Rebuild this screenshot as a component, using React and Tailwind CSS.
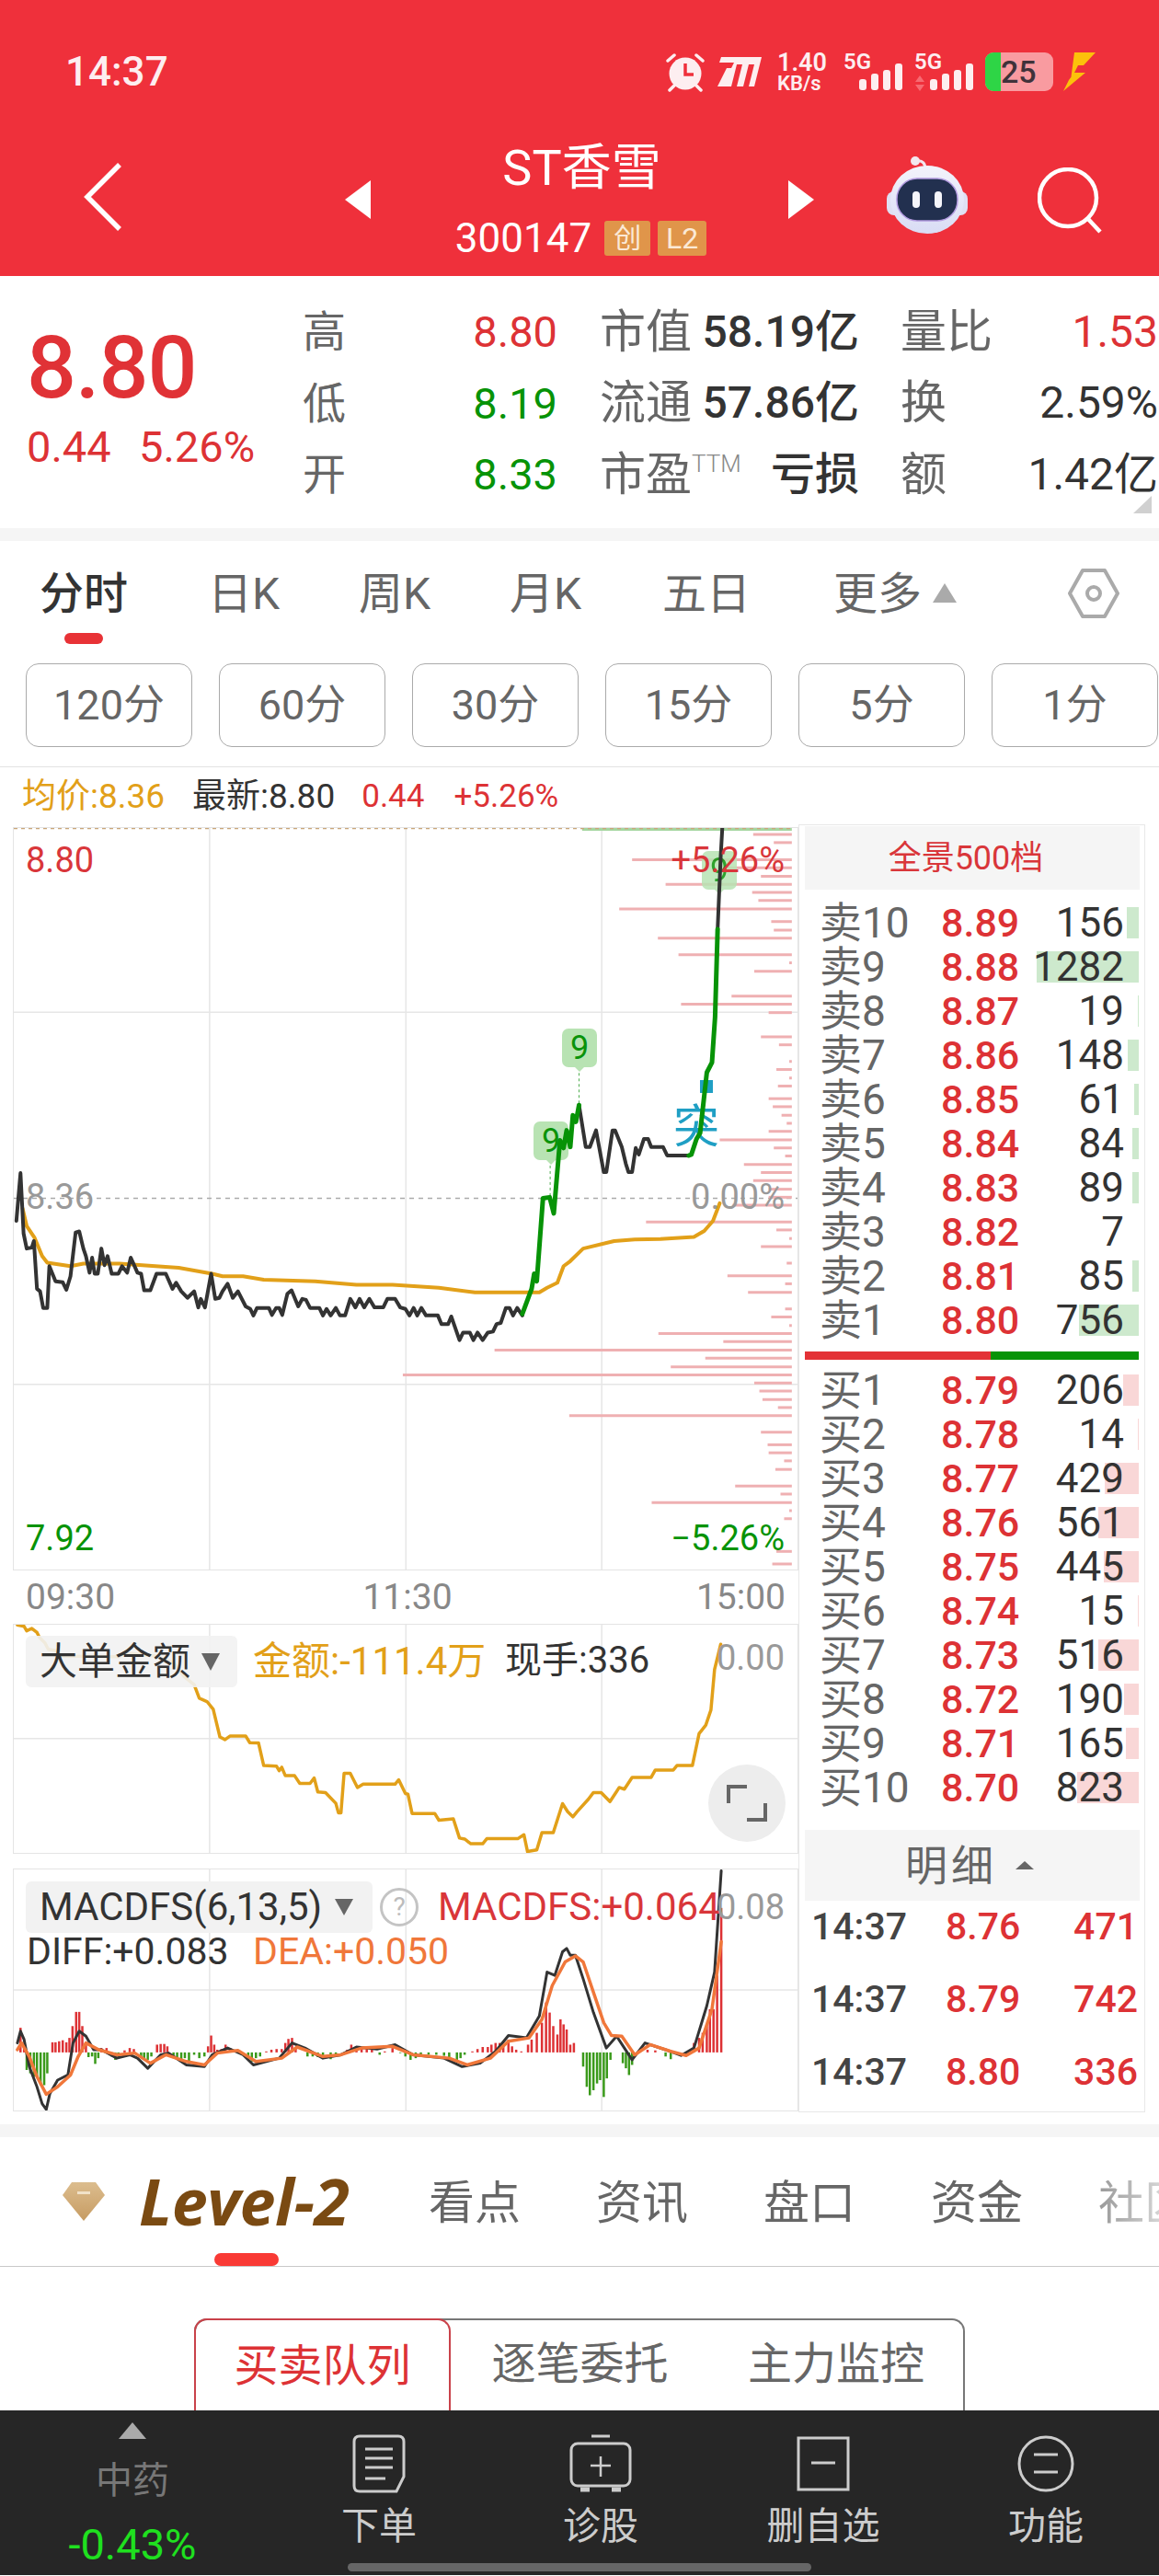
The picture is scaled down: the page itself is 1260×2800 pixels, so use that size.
import React from "react";

const FONT = { fontFamily: 'Roboto, "Noto Sans CJK SC", sans-serif' };

const BLACK1 = "30,815 38,720 44,840 50,870 60,868 64,855 70,950 76,955 82,988 90,988 94,905 106,935 120,937 127,952 135,925 145,838 152,836 160,870 165,885 172,918 177,888 182,920 188,920 195,870 201,903 207,885 215,920 228,920 235,905 245,918 252,888 265,918 272,920 278,953 290,953 302,920 320,920 333,950 340,938 350,955 362,968 375,955 383,987 388,970 396,987 408,920 416,970 424,968 430,955 440,940 450,968 460,955 475,985 484,990 490,1003 497,988 520,988 526,1002 534,988 540,988 546,1002 556,960 564,953 577,985 585,970 592,972 600,988 618,988 625,1003 632,990 640,1003 650,988 658,1003 668,1003 678,970 688,987 696,970 705,987 715,970 725,987 742,987 750,970 765,970 775,987 785,990 793,1003 801,988 808,1003 816,988 825,1003 848,1003 855,1020 868,1020 874,1005 890,1052 897,1037 910,1037 917,1052 925,1037 935,1052 945,1037 955,1035 962,1020 970,1018 980,988 987,988 994,1003 1002,988 1012,1003";
const GREEN1 = "1012,1000 1030,950 1035,920 1040,935 1052,770 1065,768 1073,800 1085,655 1092,670 1098,635 1105,668 1110,605 1116,618 1122,585";
const BLACK2 = "1122,585 1135,668 1143,668 1155,635 1170,718 1175,718 1187,635 1192,635 1205,668 1213,702 1218,718 1225,718 1232,670 1238,683 1248,652 1256,652 1262,668 1285,668 1293,685 1335,685";
const GREEN2 = "1335,685 1340,683 1350,652 1357,640 1370,520 1380,500 1386,410 1391,235";
const BLACK3 = "1391,235 1397,90 1400,35";
const AVG = "42,790 50,825 65,848 80,885 90,898 135,905 160,900 230,900 300,905 345,908 410,920 430,925 470,925 510,932 610,935 690,942 760,942 850,948 920,957 1045,957 1060,948 1080,938 1092,905 1105,895 1130,870 1190,855 1230,852 1280,851 1345,847 1365,835 1382,815 1395,780";
const VOL = [[47,1460],[63,1500],[97,1225],[113,1395],[130,1475],[146,1290],[162,1458],[178,1470],[195,1200],[220,1495],[237,1500],[253,1275],[286,1315],[302,1530],[319,1462],[368,1418],[384,1320],[401,1490],[449,1475],[465,1510],[498,1530],[514,1505],[531,1530],[547,1508],[572,1490],[588,1498],[605,1515],[621,1525],[637,1490],[654,1395],[670,1500],[686,1522],[703,1442],[719,1475],[735,1460],[752,1490],[768,1490],[784,1420],[817,1252],[833,1505],[850,1530],[866,1475],[883,1535],[899,1525],[924,1410],[940,1522],[957,1450],[990,1522],[1006,1495],[1023,1530],[1039,1276],[1055,1402],[1072,958],[1088,1367],[1105,1300],[1121,780],[1137,1462],[1153,1472],[1170,1478],[1186,1508],[1202,1103],[1235,1475],[1260,1488],[1276,1490],[1292,1520],[1309,1503],[1342,1425],[1358,1513],[1375,1263],[1391,1530],[1407,1520],[1472,1505],[1497,1497]];
const FUND = "32,68 45,72 50,85 60,78 70,90 75,105 85,120 92,140 110,145 115,160 230,162 240,150 270,155 300,160 335,180 355,220 375,245 385,285 400,295 412,318 425,400 435,408 445,397 475,397 483,417 500,418 510,485 535,487 540,500 545,490 552,515 570,515 580,538 600,538 608,522 615,563 630,565 650,597 655,625 660,625 666,508 678,508 692,550 703,540 765,540 772,527 785,568 790,570 798,627 842,627 850,647 878,643 890,700 900,703 912,717 935,717 943,702 1003,702 1015,690 1022,740 1040,735 1050,684 1072,684 1090,598 1100,622 1110,637 1118,622 1140,585 1150,565 1165,565 1182,592 1195,562 1200,550 1210,555 1225,520 1262,520 1270,498 1305,498 1312,485 1342,485 1355,390 1368,365 1378,320 1385,200 1397,125";
const DIFF = "32,1300 38,1265 45,1290 55,1370 70,1430 80,1480 88,1497 95,1450 110,1410 130,1395 140,1300 152,1265 165,1280 180,1320 195,1320 225,1345 250,1335 265,1345 285,1375 310,1335 325,1330 360,1365 395,1370 410,1335 440,1315 470,1335 490,1365 540,1345 565,1300 590,1315 625,1345 660,1335 690,1312 730,1318 765,1305 800,1335 860,1345 895,1370 930,1360 960,1325 985,1278 1020,1285 1045,1220 1060,1090 1075,1100 1090,1030 1098,1020 1105,1040 1115,1040 1130,1110 1150,1210 1175,1315 1195,1280 1210,1315 1225,1350 1250,1300 1290,1320 1320,1337 1345,1315 1370,1190 1385,1090 1398,790";
const DEA = "32,1320 40,1300 55,1340 70,1400 88,1452 110,1430 135,1395 150,1340 165,1300 190,1320 225,1335 260,1330 290,1360 320,1335 360,1355 395,1365 420,1330 460,1322 495,1355 545,1345 575,1312 625,1340 660,1335 700,1315 760,1310 800,1335 870,1345 905,1365 950,1345 985,1295 1025,1285 1050,1230 1070,1130 1095,1060 1115,1042 1130,1060 1150,1150 1170,1240 1185,1278 1205,1280 1230,1335 1260,1305 1300,1325 1330,1337 1355,1315 1380,1200 1398,1000";
const MBARS = [[38,1255],[45,1300],[50,1380],[57,1390],[64,1400],[70,1400],[77,1425],[84,1425],[90,1390],[100,1298],[106,1298],[113,1295],[120,1292],[127,1298],[133,1285],[139,1250],[146,1208],[152,1208],[158,1250],[165,1300],[170,1342],[177,1340],[183,1362],[189,1345],[195,1315],[205,1315],[215,1340],[222,1350],[228,1345],[240,1322],[250,1315],[258,1318],[272,1340],[278,1345],[285,1350],[292,1340],[303,1305],[310,1303],[317,1303],[323,1310],[335,1345],[342,1345],[350,1350],[357,1345],[365,1355],[375,1335],[385,1345],[395,1340],[402,1310],[408,1278],[414,1305],[420,1320],[428,1318],[436,1305],[445,1315],[480,1345],[487,1355],[495,1345],[503,1340],[515,1325],[525,1320],[535,1318],[545,1318],[552,1300],[558,1288],[565,1285],[572,1315],[595,1340],[605,1340],[615,1342],[625,1345],[640,1348],[650,1340],[672,1320],[680,1305],[690,1315],[700,1315],[710,1312],[720,1320],[735,1335],[745,1325],[760,1315],[775,1330],[785,1340],[795,1350],[805,1345],[815,1335],[830,1335],[845,1335],[860,1338],[870,1345],[885,1350],[892,1345],[900,1335],[915,1325],[925,1318],[935,1312],[945,1312],[952,1305],[960,1300],[968,1300],[975,1305],[985,1290],[992,1310],[1000,1320],[1010,1325],[1023,1305],[1030,1290],[1040,1270],[1050,1240],[1058,1180],[1065,1210],[1072,1250],[1080,1275],[1086,1230],[1092,1245],[1098,1260],[1105,1305],[1112,1300],[1130,1370],[1137,1430],[1143,1455],[1150,1440],[1157,1420],[1163,1410],[1170,1460],[1176,1405],[1183,1350],[1207,1360],[1213,1375],[1219,1395],[1225,1365],[1255,1320],[1270,1322],[1290,1340],[1300,1348],[1345,1300],[1355,1285],[1362,1270],[1370,1250],[1376,1200],[1383,1200],[1390,1100],[1398,900]];

const ASKS = [["卖10","8.89","156",13],["卖9","8.88","1282",111],["卖8","8.87","19",1],["卖7","8.86","148",12],["卖6","8.85","61",5],["卖5","8.84","84",7],["卖4","8.83","89",7],["卖3","8.82","7",0],["卖2","8.81","85",7],["卖1","8.80","756",65]];
const BIDS = [["买1","8.79","206",17],["买2","8.78","14",1],["买3","8.77","429",37],["买4","8.76","561",44],["买5","8.75","445",38],["买6","8.74","15",1],["买7","8.73","516",44],["买8","8.72","190",16],["买9","8.71","165",14],["买10","8.70","823",67]];

function Line({ points, color, width = 3 }) {
  return <polyline points={points} fill="none" stroke={color} strokeWidth={width} strokeLinejoin="round" strokeLinecap="round" vectorEffect="non-scaling-stroke" />;
}

function GridLines({ mid, y1, y2 }) {
  return (
    <g stroke="#e6e6e6" strokeWidth="1.5">
      {[405, 786, 1166].map((x) => (
        <line key={x} x1={x} x2={x} y1={y1} y2={y2} vectorEffect="non-scaling-stroke" />
      ))}
      {mid.map((y) => (
        <line key={y} x1="25" x2="1546" y1={y} y2={y} vectorEffect="non-scaling-stroke" />
      ))}
    </g>
  );
}

function DepthRow({ row, barColor }) {
  const [label, price, vol, bar] = row;
  return (
    <div className="relative flex h-[48px] items-center pl-[16px] pr-[16px]">
      <div className={`absolute right-0 top-[7px] h-[34px] ${barColor}`} style={{ width: bar }} />
      <span className="relative w-[132px] whitespace-nowrap text-[46px] leading-none text-[#666]">{label}</span>
      <span className="relative w-[83px] text-[43px] leading-none font-medium text-[#dd3235]">{price}</span>
      <span className="relative flex-1 text-right text-[44px] leading-none text-[#333]">{vol}</span>
    </div>
  );
}

function Alarm() {
  return (
    <svg width="44" height="44" viewBox="0 0 44 44">
      <circle cx="22" cy="24" r="17.5" fill="#fdeef0" />
      <path d="M22 13v12h9" fill="none" stroke="#ef303b" strokeWidth="3.5" />
      <path d="M3 10l7-6M41 10l-7-6M5 42l5-5M39 42l-5-5" stroke="#fdeef0" strokeWidth="3.5" strokeLinecap="round" />
    </svg>
  );
}

function MLogo() {
  return (
    <svg width="48" height="32" viewBox="0 0 48 32">
      <path d="M4 0H48L40 32H34L40 8H34L28 32H21L27 8H21L15 32H0L10 12H15L18 6H2Z" fill="#fdeef0" />
    </svg>
  );
}

function StatusNet({ arrows }) {
  return (
    <div className="relative h-[44px] w-[64px]">
      <span className="absolute left-0 top-[-1px] text-[24px] leading-[24px] font-semibold text-[#fdeef0]">5G</span>
      <svg className="absolute left-0 top-0" width="64" height="44" viewBox="0 0 64 44">
        {arrows && <path d="M1 33l5-7 5 7zM1 36l5 7 5-7z" fill="#f76a72" />}
        <rect x="17" y="30" width="8" height="12" rx="3" fill="#fdeef0" />
        <rect x="30" y="24" width="8" height="18" rx="3" fill="#fdeef0" />
        <rect x="43" y="20" width="8" height="22" rx="3" fill="#fdeef0" />
        <rect x="56" y="13" width="8" height="29" rx="3" fill="#fdeef0" />
      </svg>
    </div>
  );
}

function Robot() {
  return (
    <svg width="88" height="84" viewBox="0 0 88 84">
      <defs>
        <linearGradient id="rb" x1="0" y1="0" x2="0" y2="1">
          <stop offset="0" stopColor="#f3f3fb" />
          <stop offset="1" stopColor="#d9dcf5" />
        </linearGradient>
      </defs>
      <circle cx="31" cy="5" r="5" fill="#f3e7ee" />
      <path d="M33 5c6-1 9 3 9 9" fill="none" stroke="#f3e7ee" strokeWidth="3" />
      <rect x="0" y="38" width="88" height="26" rx="8" fill="#dfe0f3" />
      <ellipse cx="44" cy="47" rx="40" ry="37" fill="url(#rb)" />
      <rect x="11" y="24" width="66" height="46" rx="22" fill="#22304f" stroke="#b39be0" strokeWidth="1.5" />
      <rect x="28" y="38" width="8" height="18" rx="4" fill="#f5f5fa" />
      <rect x="52" y="38" width="8" height="18" rx="4" fill="#f5f5fa" />
    </svg>
  );
}

function Header() {
  return (
    <div className="h-[300px] bg-[#ef303b] text-white">
      <div className="flex h-[156px] items-center pl-[71px]">
        <span className="w-[652px] text-[44px] leading-none font-medium text-[#fdeef0]">14:37</span>
        <Alarm />
        <div className="ml-[13px]"><MLogo /></div>
        <div className="ml-[17px] flex w-[56px] flex-col items-start font-semibold text-[#fdeef0]">
          <span className="text-[27px] leading-[26px]">1.40</span>
          <span className="text-[22px] leading-[20px]">KB/s</span>
        </div>
        <div className="ml-[16px]"><StatusNet /></div>
        <div className="ml-[13px]"><StatusNet arrows /></div>
        <div className="relative ml-[13px] flex h-[42px] w-[74px] items-center overflow-hidden rounded-[9px] bg-[#f99ba0]">
          <div className="h-full w-[17px] bg-[#2ed546]" />
          <span className="absolute left-[17px] text-[34px] leading-none font-medium text-[#40323a]">25</span>
        </div>
        <div className="ml-[11px]">
          <svg width="36" height="42" viewBox="0 0 36 42">
            <path d="M12 0H35L22 14H16L8 30ZM12 22H24L0 42L6 30Z" fill="#fcc10b" />
          </svg>
        </div>
      </div>
      <div className="flex h-[144px] items-start">
        <div className="ml-[91px] mt-[20px]">
          <svg width="42" height="76" viewBox="0 0 42 76">
            <path d="M39 3L4 38L39 73" fill="none" stroke="#fff" strokeWidth="5.5" />
          </svg>
        </div>
        <div className="ml-[242px] mt-[40px] h-0 w-0 border-y-[21px] border-r-[28px] border-y-transparent border-r-white" />
        <div className="ml-[92px] flex w-[273px] flex-col items-center">
          <span className="mt-[-3px] pl-[2px] text-[54px] leading-[60px] text-white">ST香雪</span>
          <div className="mt-[27px] flex h-[38px] items-center">
            <span className="text-[44px] leading-none text-white">300147</span>
            <span className="ml-[14px] flex h-[38px] w-[50px] items-center justify-center rounded-[3px] bg-[#e0954a] text-[30px] leading-none text-[#fbe9d6]">创</span>
            <span className="ml-[8px] flex h-[38px] w-[53px] items-center justify-center rounded-[3px] bg-[#e0954a] text-[32px] leading-none text-[#fbe9d6]">L2</span>
          </div>
        </div>
        <div className="ml-[89px] mt-[40px] h-0 w-0 border-y-[21px] border-l-[28px] border-y-transparent border-l-white" />
        <div className="ml-[79px] mt-[14px]"><Robot /></div>
        <div className="ml-[76px] mt-[26px]">
          <svg width="72" height="72" viewBox="0 0 72 72">
            <circle cx="33" cy="33" r="31" fill="none" stroke="#fff" strokeWidth="4.5" />
            <path d="M54 55L68 70" stroke="#fff" strokeWidth="4.5" />
          </svg>
        </div>
      </div>
    </div>
  );
}

function QuoteRow({ label, val, valColor, l2, v2, l3, v3, v3Color = "text-[#333]", sup }) {
  return (
    <div className="flex h-[77.5px] items-center">
      <span className="w-[47px] text-[47px] leading-none text-[#666]">{label}</span>
      <span className={`w-[230px] text-right text-[47px] leading-none ${valColor}`}>{val}</span>
      <span className="ml-[46px] flex w-[110px] items-start whitespace-nowrap text-[50px] leading-none text-[#666]">{l2}{sup && <span className="text-[26px] leading-[26px] font-light text-[#888]">TTM</span>}</span>
      <span className="w-[172px] whitespace-nowrap text-right text-[48px] leading-none font-medium text-[#333]">{v2}</span>
      <span className="ml-[45px] w-[100px] text-[50px] leading-none text-[#666]">{l3}</span>
      <span className={`w-[180px] whitespace-nowrap text-right text-[48px] leading-none ${v3Color}`}>{v3}</span>
    </div>
  );
}

function Quote() {
  return (
    <div className="relative flex h-[274px] bg-white">
      <div className="w-[329px] pl-[29px] pt-[55px]">
        <div className="text-[95px] leading-[90px] font-medium tracking-[-1px] text-[#e03236]">8.80</div>
        <div className="mt-[17px] flex text-[47px] leading-none text-[#dd3235]">
          <span className="w-[122px]">0.44</span><span>5.26%</span>
        </div>
      </div>
      <div className="flex flex-col pt-[22px]">
        <QuoteRow label="高" val="8.80" valColor="text-[#dd3235]" l2="市值" v2="58.19亿" l3="量比" v3="1.53" v3Color="text-[#dd3235]" />
        <QuoteRow label="低" val="8.19" valColor="text-[#079307]" l2="流通" v2="57.86亿" l3="换" v3="2.59%" />
        <QuoteRow label="开" val="8.33" valColor="text-[#079307]" l2="市盈" sup v2="亏损" l3="额" v3="1.42亿" />
      </div>
      <div className="absolute bottom-[16px] right-[8px] h-0 w-0 border-b-[19px] border-l-[20px] border-b-[#d0d0d0] border-l-transparent" />
    </div>
  );
}

function Tabs() {
  return (
    <>
      <div className="flex h-[133px] items-start pt-[34px] text-[48px] leading-none">
        <div className="relative ml-[43px] w-[183px] font-medium text-[#333]">
          分时
          <div className="absolute left-[27px] top-[66px] h-[12px] w-[42px] rounded-full bg-[#e83236]" />
        </div>
        <span className="w-[164px] text-[#666]">日K</span>
        <span className="w-[164px] text-[#666]">周K</span>
        <span className="w-[166px] text-[#666]">月K</span>
        <span className="w-[186px] text-[#666]">五日</span>
        <span className="flex w-[256px] text-[#666]">
          更多
          <span className="ml-[12px] mt-[12px] h-0 w-0 border-x-[13px] border-b-[21px] border-x-transparent border-b-[#aaa]" />
        </span>
        <svg className="ml-[-1px] mt-[-4px]" width="56" height="54" viewBox="0 0 56 54">
          <path d="M16 2H40L54 27L40 52H16L2 27Z" fill="none" stroke="#aaa" strokeWidth="4" strokeLinejoin="round" />
          <circle cx="28" cy="27" r="7" fill="none" stroke="#aaa" strokeWidth="4" />
        </svg>
      </div>
      <div className="flex h-[91px] gap-[29px] pl-[28px]">
        {["120分", "60分", "30分", "15分", "5分", "1分"].map((t) => (
          <div key={t} className="flex h-[91px] w-[181px] shrink-0 items-center justify-center rounded-[14px] border border-[#aaa] text-[45px] leading-none text-[#666]">{t}</div>
        ))}
      </div>
      <div className="h-[21px]" />
      <div className="flex h-[63px] items-center border-t border-[#e2e2e2] pl-[24px] text-[37px] leading-none">
        <span className="text-[#e2a019]">均价:8.36</span>
        <span className="ml-[30px] text-[#333]">最新:8.80</span>
        <span className="ml-[29px] text-[35px] text-[#dd3235]">0.44</span>
        <span className="ml-[32px] text-[35px] text-[#dd3235]">+5.26%</span>
      </div>
    </>
  );
}

function Badge({ left, top, faded }) {
  return (
    <div className="absolute flex h-[42px] w-[38px] items-center justify-center rounded-[7px] bg-[#b8e3b3] text-[36px] leading-none text-[#0a930a]" style={{ left, top, opacity: faded ? 0.85 : 1 }}>
      9
      <div className="absolute bottom-[-5px] left-[14px] h-0 w-0 border-x-[5px] border-t-[5px] border-x-transparent border-t-[#b8e3b3]" />
    </div>
  );
}

function MainChart() {
  return (
    <div className="relative h-[808px] w-[854px] border border-[#e4e4e4] bg-white">
      <svg className="absolute inset-0 h-full w-full" viewBox="25 34 1521 1474" preserveAspectRatio="none">
        <GridLines mid={[400, 1140]} y1={34} y2={1508} />
        <line x1="25" x2="1546" y1="770" y2="770" stroke="#aaa" strokeWidth="1.5" strokeDasharray="5 5" vectorEffect="non-scaling-stroke" />
        <g stroke="#efb0b2" strokeWidth="3">
          {VOL.map(([y, x]) => (
            <line key={y} x1={x} x2="1535" y1={y} y2={y} vectorEffect="non-scaling-stroke" />
          ))}
        </g>
        <line x1="1128" x2="1535" y1="36" y2="36" stroke="#a5d6a0" strokeWidth="4" vectorEffect="non-scaling-stroke" />
        <line x1="25" x2="1535" y1="35" y2="35" stroke="#c9a67a" strokeWidth="1.5" strokeDasharray="4 4" vectorEffect="non-scaling-stroke" />
        <line x1="1122" x2="1122" y1="510" y2="585" stroke="#4fae4f" strokeWidth="1" strokeDasharray="3 3" vectorEffect="non-scaling-stroke" />
        <line x1="1066" x2="1066" y1="705" y2="770" stroke="#4fae4f" strokeWidth="1" strokeDasharray="3 3" vectorEffect="non-scaling-stroke" />
      </svg>
      <Badge left={596} top={218} />
      <Badge left={565} top={319} />
      <Badge left={748} top={25} faded />
      <span className="absolute left-[717px] top-[300px] text-[50px] leading-none text-[#1f9fc4]">突</span>
      <div className="absolute left-[746px] top-[274px] h-[14px] w-[14px] bg-[#1f9fc4]" />
      <svg className="absolute inset-0 h-full w-full" viewBox="25 34 1521 1474" preserveAspectRatio="none">
        <Line points={AVG} color="#e2a019" width={4} />
        <Line points={BLACK1} color="#333" width={4} />
        <Line points={BLACK2} color="#333" width={4} />
        <Line points={BLACK3} color="#333" width={4} />
        <Line points={GREEN1} color="#079307" width={5} />
        <Line points={GREEN2} color="#079307" width={5} />
      </svg>
      <span className="absolute left-[13px] top-[16px] text-[38px] leading-none text-[#d9363a]">8.80</span>
      <span className="absolute right-[14px] top-[16px] text-[38px] leading-none text-[#d9363a]">+5.26%</span>
      <span className="absolute left-[13px] top-[382px] text-[38px] leading-none text-[#999]">8.36</span>
      <span className="absolute right-[14px] top-[382px] text-[38px] leading-none text-[#999]">0.00%</span>
      <span className="absolute left-[13px] bottom-[15px] text-[38px] leading-none text-[#079307]">7.92</span>
      <span className="absolute right-[14px] bottom-[15px] text-[38px] leading-none text-[#079307]">−5.26%</span>
    </div>
  );
}

function FundChart() {
  return (
    <div className="relative h-[250px] w-[854px] border border-[#e4e4e4] bg-white">
      <svg className="absolute inset-0 h-full w-full" viewBox="25 67 1521 677" preserveAspectRatio="none">
        <GridLines mid={[405]} y1={67} y2={744} />
        <Line points={FUND} color="#e2a019" width={3.5} />
      </svg>
      <div className="absolute left-[13px] top-[12px] flex h-[56px] w-[230px] items-center whitespace-nowrap rounded-[6px] bg-[#f2f2f2]/90 pl-[15px] text-[41px] leading-none text-[#333]">
        大单金额
        <span className="ml-[12px] h-0 w-0 border-x-[10px] border-t-[19px] border-x-transparent border-t-[#666]" />
      </div>
      <span className="absolute left-[260px] top-[19px] whitespace-nowrap text-[42px] leading-none text-[#e2a019]">金额:-111.4万</span>
      <span className="absolute left-[534px] top-[19px] whitespace-nowrap text-[40px] leading-none text-[#333]">现手:336</span>
      <span className="absolute right-[14px] top-[17px] text-[38px] leading-none text-[#999]">0.00</span>
      <div className="absolute bottom-[12px] right-[13px] flex h-[84px] w-[84px] items-center justify-center rounded-full bg-[#ededed]">
        <svg width="44" height="44" viewBox="0 0 44 44">
          <path d="M2 22V4H22M42 22V40H22" fill="none" stroke="#666" strokeWidth="4" />
        </svg>
      </div>
    </div>
  );
}

function MacdChart() {
  return (
    <div className="relative h-[264px] w-[854px] border border-[#e4e4e4] bg-white">
      <svg className="absolute inset-0 h-full w-full" viewBox="25 786 1521 714" preserveAspectRatio="none">
        <GridLines mid={[1143]} y1={786} y2={1500} />
        {MBARS.map(([x, y]) => (
          <line key={x} x1={x} x2={x} y1="1328" y2={y} stroke={y < 1328 ? "#dd3235" : "#3a9a1a"} strokeWidth="2.5" vectorEffect="non-scaling-stroke" />
        ))}
        <Line points={DIFF} color="#333" width={3} />
        <Line points={DEA} color="#f0773a" width={3.5} />
      </svg>
      <div className="absolute left-[13px] top-[13px] flex h-[56px] w-[377px] items-center whitespace-nowrap rounded-[6px] bg-[#f2f2f2] pl-[15px] text-[42px] leading-none text-[#333]">
        MACDFS(6,13,5)
        <span className="ml-[14px] h-0 w-0 border-x-[10px] border-t-[18px] border-x-transparent border-t-[#666]" />
      </div>
      <div className="absolute left-[398px] top-[20px] flex h-[42px] w-[42px] items-center justify-center rounded-full border-[3px] border-[#c4c4c4] text-[28px] leading-none text-[#bbb]">?</div>
      <span className="absolute left-[461px] top-[20px] whitespace-nowrap text-[42px] leading-none text-[#d9363a]">MACDFS:+0.064</span>
      <span className="absolute right-[14px] top-[22px] text-[38px] leading-none text-[#999]">0.08</span>
      <span className="absolute left-[14px] top-[69px] whitespace-nowrap text-[41px] leading-none text-[#333]">DIFF:+0.083</span>
      <span className="absolute left-[260px] top-[69px] whitespace-nowrap text-[41px] leading-none text-[#f0773a]">DEA:+0.050</span>
    </div>
  );
}

function LeftColumn() {
  return (
    <div className="w-[868px] pl-[14px] pt-[3px]">
      <MainChart />
      <div className="flex h-[58px] w-[854px] items-center justify-between px-[14px] text-[39px] leading-none text-[#888]">
        <span>09:30</span><span className="ml-[4px]">11:30</span><span>15:00</span>
      </div>
      <FundChart />
      <div className="h-[16px]" />
      <MacdChart />
    </div>
  );
}

function RightColumn() {
  return (
    <div className="h-[1400px] w-[377px] border border-[#e8e8e8] px-[6px] pt-[1px]">
      <div className="flex h-[69px] w-[364px] items-center justify-center bg-[#f5f5f5] pr-[14px] text-[36px] leading-none text-[#d9363a]">全景500档</div>
      <div className="pt-[12px]">
        {ASKS.map((r) => <DepthRow key={r[0]} row={r} barColor="bg-[#cde9cd]" />)}
      </div>
      <div className="mt-[10px] flex h-[9px]">
        <div className="w-[202px] bg-[#e33236]" />
        <div className="flex-1 bg-[#079307]" />
      </div>
      <div className="pt-[9px]">
        {BIDS.map((r) => <DepthRow key={r[0]} row={r} barColor="bg-[#f9d7d7]" />)}
      </div>
      <div className="mt-[22px] flex h-[77px] w-[364px] items-center justify-center bg-[#f5f5f5] pr-[6px] text-[46px] leading-none tracking-[4px] text-[#666]">
        明细
        <span className="ml-[20px] h-0 w-0 border-x-[10px] border-b-[9px] border-x-transparent border-b-[#666]" />
      </div>
      <div className="-mt-[11px]">
        {[["8.76", "471"], ["8.79", "742"], ["8.80", "336"]].map(([p, v]) => (
          <div key={p} className="flex h-[79px] items-center pl-[7px] pr-[1px] text-[41px] leading-none font-medium">
            <span className="w-[146px] text-[#444]">14:37</span>
            <span className="text-[#dd3235]">{p}</span>
            <span className="flex-1 text-right text-[#dd3235]">{v}</span>
          </div>
        ))}
      </div>
    </div>
  );
}

function Level2Tabs() {
  return (
    <div className="relative flex h-[141px] items-start overflow-hidden border-b border-[#c9c9c9] pt-[42px]">
      <svg className="ml-[68px] mt-[7px] shrink-0" width="46" height="42" viewBox="0 0 46 42">
        <defs>
          <linearGradient id="gem" x1="0" y1="0" x2="0" y2="1">
            <stop offset="0" stopColor="#dcbd8e" />
            <stop offset="1" stopColor="#c69b62" />
          </linearGradient>
        </defs>
        <path d="M10 0H36L46 14L23 42L0 14Z" fill="url(#gem)" />
        <rect x="16" y="10" width="14" height="3" fill="#f1e2c8" />
      </svg>
      <span className="ml-[37px] w-[315px] shrink-0 whitespace-nowrap text-[70px] leading-[54px] font-bold italic tracking-[-0.5px] text-[#7a4a12]" style={{ fontFamily: '"Open Sans", sans-serif' }}>Level-2</span>
      <div className="mt-[5px] flex shrink-0 gap-[82px] whitespace-nowrap text-[50px] leading-none text-[#666]">
        <span>看点</span><span>资讯</span><span>盘口</span><span>资金</span>
        <span className="bg-gradient-to-r from-[#999] to-[#f2f2f2] bg-clip-text text-transparent">社区</span>
      </div>
      <div className="absolute bottom-0 left-[233px] h-[14px] w-[70px] rounded-t-full rounded-b-full bg-[#f93a35]" />
    </div>
  );
}

function Segment() {
  return (
    <div className="mt-[56px] flex h-[100px] justify-center">
      <div className="flex h-[100px] w-[838px] whitespace-nowrap rounded-t-[14px] border-x-2 border-t-2 border-[#777] text-[48px] leading-none text-[#666]">
        <div className="-ml-[2px] -mt-[2px] flex h-[102px] w-[279px] items-center justify-center rounded-t-[14px] border-x-2 border-t-2 border-[#c9424a] text-[#dd3235]">买卖队列</div>
        <div className="-mt-[2px] flex w-[281px] items-center justify-center">逐笔委托</div>
        <div className="-mt-[2px] flex flex-1 items-center justify-center">主力监控</div>
      </div>
    </div>
  );
}

function NavItem({ icon, label, width }) {
  return (
    <div className="flex flex-col items-center" style={{ width }}>
      <div className="flex h-[66px] items-center justify-center">{icon}</div>
      <span className="mt-[15px] whitespace-nowrap text-[41px] leading-none text-[#ccc]">{label}</span>
    </div>
  );
}

function BottomNav() {
  const s = { fill: "none", stroke: "#ccc", strokeWidth: 3 };
  return (
    <div className="relative flex h-[179px] bg-[#262626] pt-[25px]">
      <div className="flex w-[292px] flex-col items-center pr-[4px]">
        <div className="mt-[-12px] h-0 w-0 border-x-[15px] border-b-[18px] border-x-transparent border-b-[#aaa]" />
        <span className="mt-[26px] text-[40px] leading-none text-[#777]">中药</span>
        <span className="mt-[25px] text-[47px] leading-none text-[#1fe01f]">-0.43%</span>
      </div>
      <div className="flex">
        <NavItem width={240} label="下单" icon={
          <svg width="58" height="64" viewBox="0 0 58 64">
            <path d="M8 2H50Q56 2 56 8V46L48 62H8Q2 62 2 56V8Q2 2 8 2Z" {...s} />
            <path d="M14 16H44M14 26H44M14 36H44M14 48H36" {...s} />
          </svg>} />
        <NavItem width={242} label="诊股" icon={
          <svg width="68" height="64" viewBox="0 0 68 64">
            <path d="M24 2H44" {...s} />
            <rect x="2" y="10" width="64" height="46" rx="7" {...s} />
            <path d="M34 24V46M23 34H45" stroke="#ccc" strokeWidth="2.5" />
            <path d="M12 60H22M46 60H56" stroke="#ccc" strokeWidth="5" />
          </svg>} />
        <NavItem width={242} label="删自选" icon={
          <svg width="58" height="60" viewBox="0 0 58 60">
            <rect x="2" y="2" width="54" height="56" {...s} />
            <path d="M16 29H42" {...s} />
          </svg>} />
        <NavItem width={242} label="功能" icon={
          <svg width="62" height="62" viewBox="0 0 62 62">
            <ellipse cx="31" cy="31" rx="29" ry="29" {...s} />
            <path d="M18 21H44M18 40H44" {...s} />
          </svg>} />
      </div>
      <div className="absolute bottom-[4px] left-[378px] h-[9px] w-[504px] rounded-full bg-[#666]" />
    </div>
  );
}

export default function App() {
  return (
    <div className="h-[2800px] w-[1260px] overflow-hidden bg-white" style={FONT}>
      <Header />
      <Quote />
      <div className="h-[14px] bg-[#f5f5f5]" />
      <Tabs />
      <div className="flex h-[1413px]">
        <LeftColumn />
        <RightColumn />
      </div>
      <div className="h-[14px] bg-[#f5f5f5]" />
      <Level2Tabs />
      <Segment />
      <BottomNav />
    </div>
  );
}
